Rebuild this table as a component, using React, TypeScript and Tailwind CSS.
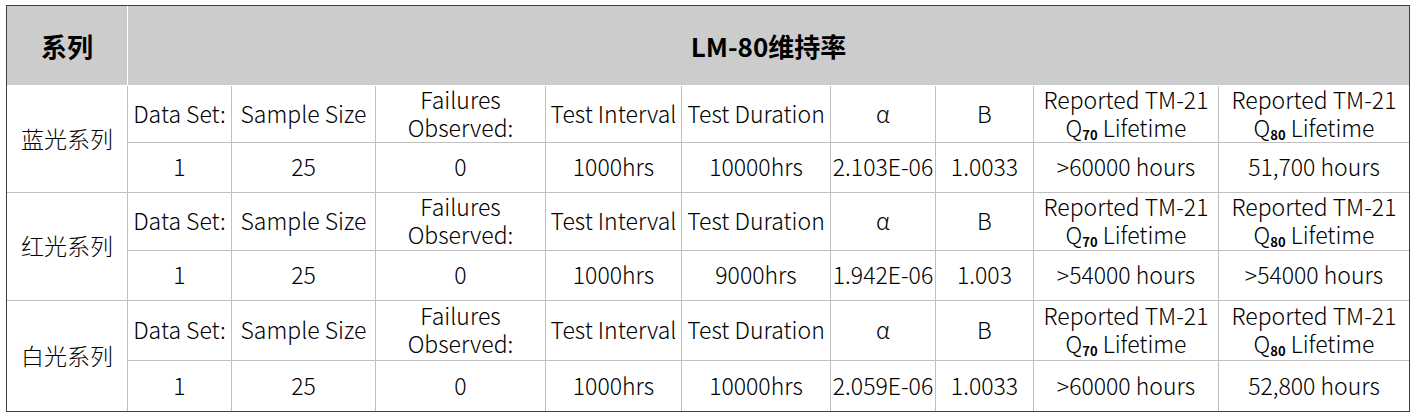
const FONT = "font-['Noto_Sans_CJK_SC','Noto_Sans',sans-serif]";

type Series = {
  name: string;
  duration: string;
  alpha: string;
  beta: string;
  q70: string;
  q80: string;
};

const SERIES: Series[] = [
  { name: "蓝光系列", duration: "10000hrs", alpha: "2.103E-06", beta: "1.0033", q70: ">60000 hours", q80: "51,700 hours" },
  { name: "红光系列", duration: "9000hrs", alpha: "1.942E-06", beta: "1.003", q70: ">54000 hours", q80: ">54000 hours" },
  { name: "白光系列", duration: "10000hrs", alpha: "2.059E-06", beta: "1.0033", q70: ">60000 hours", q80: "52,800 hours" },
];

function Cell({ children, className = "" }: { children: React.ReactNode; className?: string }) {
  return (
    <div
      className={`flex items-center justify-center whitespace-nowrap bg-white pb-[3px] text-center leading-[28px] ${className}`}
    >
      {children}
    </div>
  );
}

function Lifetime({ q }: { q: string }) {
  return (
    <div>
      Reported TM-21
      <br />
      Q<sub className="text-[13px] font-bold">{q}</sub> Lifetime
    </div>
  );
}

export default function App() {
  return (
    <div className={`${FONT} pl-[6px] pt-[5px] text-[23px] font-light text-black`}>
      <div className="w-[1404px] border border-[#3f3f3f] bg-white">
        <div className="flex h-[79px] gap-px text-[26px] font-bold">
          <div className="flex w-[120px] items-center justify-center bg-[#cccccc]">系列</div>
          <div className="flex flex-1 items-center justify-center bg-[#cccccc]">LM-80维持率</div>
        </div>
        <div className="mt-px grid grid-cols-[120px_103px_143px_169px_135px_148px_104px_97px_184px_190px] grid-rows-[56px_49px_57px_49px_59px_50px] gap-px bg-[#bfbfbf]">
          {SERIES.map((s) => (
            <>
              <Cell key={s.name} className="row-span-2">{s.name}</Cell>
              <Cell>Data Set:</Cell>
              <Cell>Sample Size</Cell>
              <Cell>
                <div>
                  Failures
                  <br />
                  Observed:
                </div>
              </Cell>
              <Cell>Test Interval</Cell>
              <Cell>Test Duration</Cell>
              <Cell>α</Cell>
              <Cell>B</Cell>
              <Cell>
                <Lifetime q="70" />
              </Cell>
              <Cell>
                <Lifetime q="80" />
              </Cell>
              <Cell>1</Cell>
              <Cell>25</Cell>
              <Cell>0</Cell>
              <Cell>1000hrs</Cell>
              <Cell>{s.duration}</Cell>
              <Cell>{s.alpha}</Cell>
              <Cell>{s.beta}</Cell>
              <Cell>{s.q70}</Cell>
              <Cell>{s.q80}</Cell>
            </>
          ))}
        </div>
      </div>
    </div>
  );
}
